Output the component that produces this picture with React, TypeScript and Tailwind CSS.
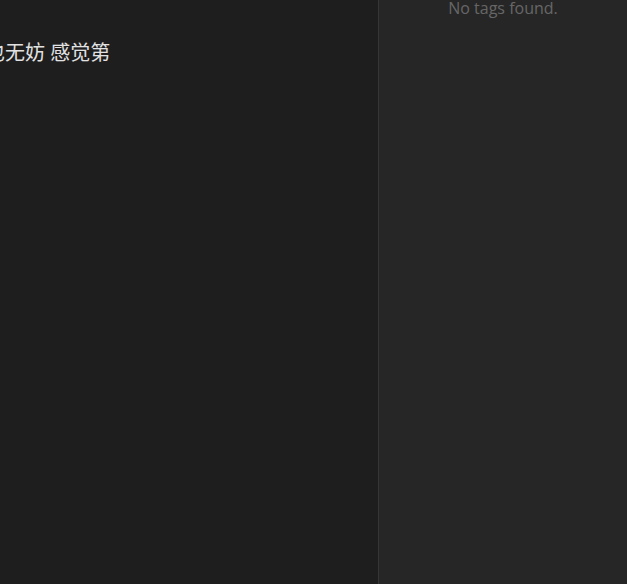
function Editor() {
  return (
    <main className="min-w-0 flex-1 overflow-hidden bg-[#1e1e1e] pt-[37px]">
      <p className="-ml-[15px] whitespace-nowrap font-['Open_Sans','Noto_Sans_CJK_SC',sans-serif] text-[20px] leading-8 text-[#e2e2e2]">
        也无妨 感觉第
      </p>
    </main>
  );
}

function TagPane() {
  return (
    <aside className="w-[249px] shrink-0 border-l border-[#363636] bg-[#262626]">
      <p className="text-center font-['Open_Sans','Noto_Sans',sans-serif] text-[16px] leading-4 text-[#666666]">
        No tags found.
      </p>
    </aside>
  );
}

export default function App() {
  return (
    <div className="flex h-screen overflow-hidden bg-[#1e1e1e]">
      <Editor />
      <TagPane />
    </div>
  );
}
